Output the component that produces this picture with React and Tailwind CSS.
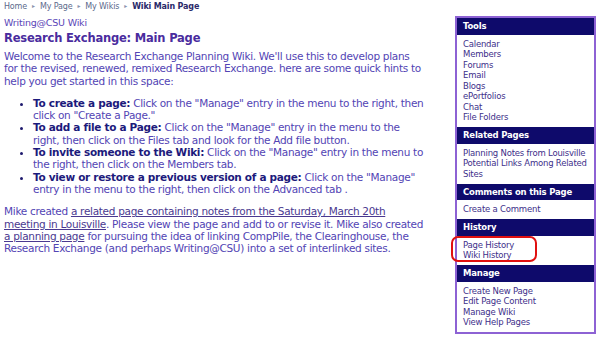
import React from "react";

const sections = [
  {
    title: "Tools",
    items: ["Calendar", "Members", "Forums", "Email", "Blogs", "ePortfolios", "Chat", "File Folders"],
  },
  {
    title: "Related Pages",
    items: ["Planning Notes from Louisville", "Potential Links Among Related Sites"],
  },
  { title: "Comments on this Page", items: ["Create a Comment"] },
  { title: "History", items: ["Page History", "Wiki History"], marked: true },
  {
    title: "Manage",
    items: ["Create New Page", "Edit Page Content", "Manage Wiki", "View Help Pages"],
  },
];

// line breaks kept as in the original page
const hints = [
  {
    label: "To create a page:",
    lines: [' Click on the "Manage" entry in the menu to the right, then', 'click on "Create a Page."'],
  },
  {
    label: "To add a file to a Page:",
    lines: [
      ' Click on the "Manage" entry in the menu to the',
      "right, then click on the Files tab and look for the Add file button.",
    ],
  },
  {
    label: "To invite someone to the Wiki:",
    lines: [' Click on the "Manage" entry in the menu to', "the right, then click on the Members tab."],
  },
  {
    label: "To view or restore a previous version of a page:",
    lines: [' Click on the "Manage"', "entry in the menu to the right, then click on the Advanced tab ."],
  },
];

const Crumb = ({ children, last }) => (
  <span className={last ? "font-bold text-[#2a2a6a]" : "text-[#5c6a8c]"}>{children}</span>
);

const Sep = () => <span className="mx-[5px] text-[6px] text-[#8a93ad] align-[1px]">▸</span>;

const Sidebar = () => (
  <div className="w-[141px] border-2 border-[#8d62d4] bg-white text-[8.5px] leading-[10.5px] tracking-[-0.2px] text-[#3d2f8a]">
    {sections.map((s) => (
      <div key={s.title} className="relative">
        <div className="bg-[#0e0a6b] px-[6px] pt-[3px] pb-[3px] font-bold text-white">{s.title}</div>
        <div className="px-[6px] pt-[4px] pb-[4.5px]">
          {s.items.map((it) => (
            <div key={it}>{it}</div>
          ))}
        </div>
        {s.marked && (
          <div className="absolute left-[-6px] top-[17px] h-[26px] w-[86px] rounded-[7px] border-2 border-[#e01010]" />
        )}
      </div>
    ))}
  </div>
);

export default function App() {
  return (
    <div
      className="flex h-[341px] w-[600px] bg-white"
      style={{ fontFamily: '"DejaVu Sans", Verdana, sans-serif' }}
    >
      <div className="w-[452px] pl-[4px] pr-[10px] pt-[1px]">
        <div className="text-[8px] leading-[10px] tracking-[-0.15px]">
          <Crumb>Home</Crumb>
          <Sep />
          <Crumb>My Page</Crumb>
          <Sep />
          <Crumb>My Wikis</Crumb>
          <Sep />
          <Crumb last>Wiki Main Page</Crumb>
        </div>
        <div className="mt-[5px] text-[9.5px] leading-[12px] tracking-[-0.2px] text-[#5a45b8]">
          Writing@CSU Wiki
        </div>
        <h1 className="mt-[2px] text-[11.5px] leading-[14px] tracking-[-0.2px] font-bold text-[#4a2c9e]">
          Research Exchange: Main Page
        </h1>
        <div className="whitespace-nowrap text-[10.5px] leading-[12.3px] tracking-[-0.3px] text-[#5244b4]">
          <p className="mt-[5px]">
            Welcome to the Research Exchange Planning Wiki. We'll use this to develop plans
            <br />
            for the revised, renewed, remixed Research Exchange. here are some quick hints to
            <br />
            help you get started in this space:
          </p>
          <ul className="mt-[10px] list-disc pl-[29px] marker:text-[#1e1a6e]">
            {hints.map((h) => (
              <li key={h.label}>
                <b className="text-[#1c1a7c]">{h.label}</b>
                {h.lines[0]}
                <br />
                {h.lines[1]}
              </li>
            ))}
          </ul>
          <p className="mt-[10px]">
            Mike created{" "}
            <a className="text-[#4a3990] underline">
              a related page containing notes from the Saturday, March 20th
              <br />
              meeting in Louisville
            </a>
            . Please view the page and add to or revise it. Mike also created
            <br />
            <a className="text-[#4a3990] underline">a planning page</a> for pursuing the idea of
            linking CompPile, the Clearinghouse, the
            <br />
            Research Exchange (and perhaps Writing@CSU) into a set of interlinked sites.
          </p>
        </div>
      </div>
      <div className="pt-[16px] pl-[3px]">
        <Sidebar />
      </div>
    </div>
  );
}
